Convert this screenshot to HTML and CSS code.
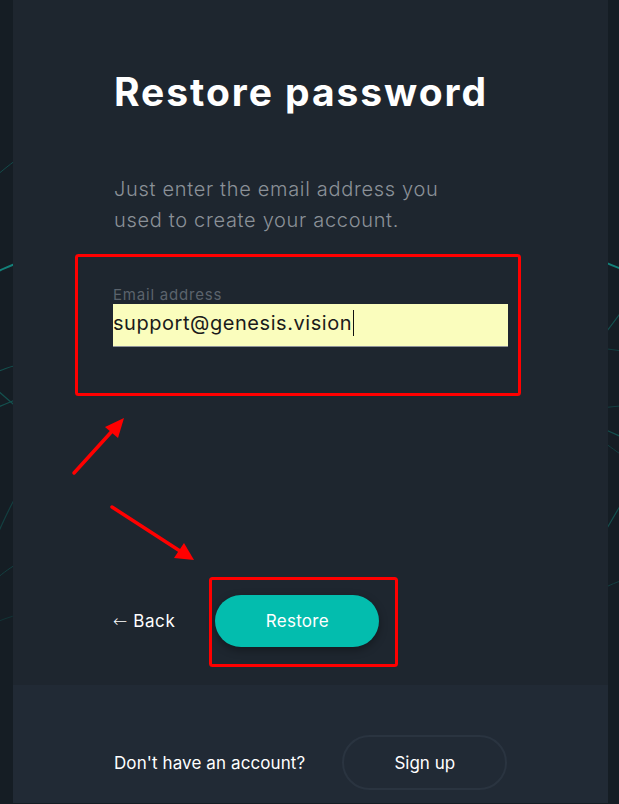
FILE: index.html
```html
<!DOCTYPE html>
<html lang="en">
<head>
    <meta charset="UTF-8">
    <meta name="viewport" content="width=device-width, initial-scale=1.0">
    <title>Restore password</title>
    <link rel="stylesheet" href="styles.css">
</head>
<body>
    <div class="page">
        <!-- decorative network lines behind the card -->
        <svg class="backdrop" width="619" height="804" viewBox="0 0 619 804" fill="none">
            <path d="M-20 190 C 0 172, 10 164, 30 150" stroke="#134a4a" stroke-width="1"/>
            <path d="M-30 285 C 0 270, 10 265, 40 255" stroke="#138079" stroke-width="2"/>
            <path d="M-20 380 C 0 370, 10 366, 30 362" stroke="#14504e" stroke-width="1.2"/>
            <path d="M-10 384 L 20 410" stroke="#14504e" stroke-width="1.2"/>
            <path d="M-10 410 C 4 405, 10 402, 20 398" stroke="#14504e" stroke-width="1.2"/>
            <path d="M-5 540 C 4 520, 10 505, 20 490" stroke="#133f40" stroke-width="1.2"/>
            <path d="M-5 580 C 4 572, 10 568, 20 562" stroke="#133f40" stroke-width="1"/>
            <path d="M-10 625 C 0 620, 10 617, 20 614" stroke="#123436" stroke-width="1"/>
            <path d="M595 258 C 605 262, 612 266, 630 272" stroke="#138079" stroke-width="2"/>
            <path d="M600 340 C 608 330, 614 322, 630 300" stroke="#14504e" stroke-width="1.2"/>
            <path d="M600 348 L 630 352" stroke="#133f40" stroke-width="1"/>
            <path d="M600 408 L 630 405" stroke="#133f40" stroke-width="1"/>
            <path d="M600 427 C 610 432, 616 435, 630 440" stroke="#14504e" stroke-width="1.2"/>
            <path d="M600 440 C 610 446, 616 452, 630 460" stroke="#133f40" stroke-width="1"/>
            <path d="M606 530 C 612 520, 616 512, 630 490" stroke="#14504e" stroke-width="1.2"/>
            <path d="M600 590 C 610 585, 616 582, 630 578" stroke="#133f40" stroke-width="1"/>
        </svg>

        <div class="card">
            <div class="card-main">
                <h1 class="title">Restore password</h1>
                <p class="lead">Just enter the email address you used to create your account.</p>

                <div class="field">
                    <label class="field-label" for="email">Email address</label>
                    <div class="field-input" id="email">support@genesis.vision<span class="caret"></span></div>
                </div>

                <div class="actions">
                    <a class="back-link" href="#"><span class="back-arrow">&larr;</span> Back</a>
                    <button class="primary-button" type="button">Restore</button>
                </div>
            </div>

            <div class="card-footer">
                <span class="footer-text">Don't have an account?</span>
                <button class="outline-button" type="button">Sign up</button>
            </div>
        </div>

        <!-- screenshot annotations -->
        <svg class="annotations" width="619" height="804" viewBox="0 0 619 804" fill="none">
            <rect x="76.5" y="255.5" width="443" height="139" rx="2" stroke="#ff0000" stroke-width="3"/>
            <rect x="210.5" y="578.5" width="186" height="87" rx="2" stroke="#ff0000" stroke-width="3"/>
            <line x1="74" y1="473" x2="114" y2="429" stroke="#ff0000" stroke-width="3.5" stroke-linecap="round"/>
            <polygon points="124,418 118,438 105,427" fill="#ff0000"/>
            <line x1="112" y1="507" x2="180" y2="551" stroke="#ff0000" stroke-width="3.5" stroke-linecap="round"/>
            <polygon points="194,560 174,558 184,543" fill="#ff0000"/>
        </svg>
    </div>
</body>
</html>
```

FILE: styles.css
```css
body {
    margin: 0;
    background: #151d24;
    font-family: Inter, "DejaVu Sans", sans-serif;
    color: #fff;
}
.page {
    position: relative;
    width: 619px;
    height: 804px;
    overflow: hidden;
}
.backdrop,
.annotations {
    position: absolute;
    top: 0;
    left: 0;
    pointer-events: none;
}
.annotations {
    z-index: 2;
}
.card {
    position: relative;
    z-index: 1;
    width: 595px;
    margin-left: 13px;
    background: #1e262f;
}
.card-main {
    padding: 69px 100px 38px 100px;
}
.title {
    margin: 0;
    font-size: 39px;
    line-height: 46px;
    font-weight: 700;
    letter-spacing: 1.95px;
    padding-left: 1px;
}
.lead {
    margin: 59px 0 0;
    padding-left: 1px;
    max-width: 345px;
    font-size: 20px;
    line-height: 31px;
    font-weight: 300;
    letter-spacing: .68px;
    color: #8b9198;
}
.field {
    margin-top: 50px;
}
.field-label {
    display: block;
    font-size: 15px;
    line-height: 18px;
    letter-spacing: .8px;
    color: #5b636c;
}
.field-input {
    height: 42px;
    line-height: 38px;
    font-size: 20px;
    letter-spacing: .55px;
    color: #1b1b1b;
    background: #fafdbd;
    border-bottom: 1px solid #8d9297;
}
.caret {
    display: inline-block;
    width: 1px;
    height: 26px;
    margin-left: 1px;
    vertical-align: -6px;
    background: #111;
}
.actions {
    display: flex;
    align-items: center;
    gap: 40px;
    margin-top: 248px;
}
.back-link {
    color: #fff;
    text-decoration: none;
    font-size: 17px;
    letter-spacing: .6px;
}
.back-arrow {
    font-family: "DejaVu Sans", sans-serif;
    font-weight: 300;
}
.primary-button {
    width: 164px;
    height: 52px;
    border: none;
    border-radius: 26px;
    background: #03bdae;
    color: #fff;
    font-family: inherit;
    font-size: 17px;
    letter-spacing: .3px;
    box-shadow: 0 3px 8px rgba(0, 0, 0, .35);
    cursor: pointer;
}
.card-footer {
    display: flex;
    align-items: center;
    gap: 37px;
    padding: 50px 100px 13px 101px;
    background: #212a35;
}
.footer-text {
    font-size: 17px;
    letter-spacing: .1px;
}
.outline-button {
    width: 165px;
    height: 55px;
    border: 2px solid #2a3440;
    border-radius: 28px;
    background: transparent;
    color: #fff;
    font-family: inherit;
    font-size: 17px;
    cursor: pointer;
}
```
